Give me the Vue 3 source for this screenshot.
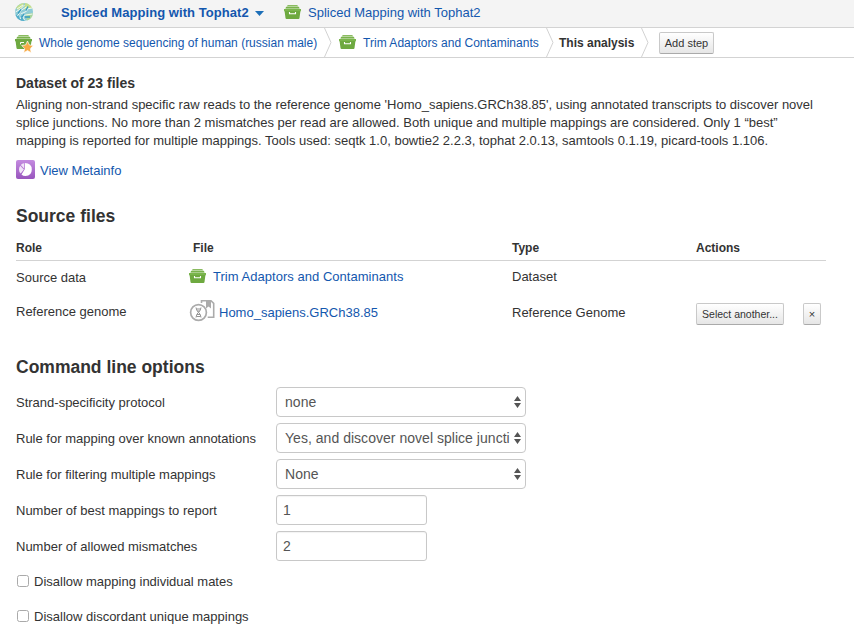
<script setup>
import { h, ref } from 'vue'

const BoxIcon = () =>
  h('svg', { width: 17, height: 14, viewBox: '0 0 17 14' }, [
    h('path', { d: 'M4 0h9q.7 0 .8 1H3.200Q3.300 0 4 0z', fill: '#8abb60' }),
    h('path', { d: 'M2.500 1.700h12q.7 0 .8 1.300H1.700q.1-1.300.8-1.300z', fill: '#79b24c' }),
    h('path', { d: 'M3.200 1h10.600l.4.700H2.800zM1.700 3h13.600l.4 1H1.300z', fill: '#a9cd8b' }),
    h('path', { d: 'M.5 4h16q.5 0 .5.500v1.200q0 .5-.6.500l-.9 6.800q-.1 1-1 1h-12q-.9 0-1-1L.6 6.200Q0 6.200 0 5.700V4.500Q0 4 .5 4z', fill: '#6ea940' }),
    h('path', { d: 'M.5 4h16q.5 0 .5.500V6H0V4.500Q0 4 .5 4z', fill: '#7ab54c' }),
    h('path', { d: 'M5.500 7v1.800h6V7', fill: 'none', stroke: '#fff', 'stroke-width': 1.1, 'stroke-linejoin': 'round' })
  ])

const selects = [
  { label: 'Strand-specificity protocol', value: 'none' },
  { label: 'Rule for mapping over known annotations', value: 'Yes, and discover novel splice juncti' },
  { label: 'Rule for filtering multiple mappings', value: 'None' }
]
const inputs = ref([
  { label: 'Number of best mappings to report', value: '1' },
  { label: 'Number of allowed mismatches', value: '2' }
])
const checks = ref([
  { label: 'Disallow mapping individual mates', on: false },
  { label: 'Disallow discordant unique mappings', on: false }
])
</script>

<template>
  <div class="page">
    <header class="topbar">
      <svg class="globe" width="18" height="18" viewBox="0 0 18 18">
        <circle cx="9" cy="9" r="9" fill="#8dcbd6" />
        <path d="M1 5Q4 .5 9 0l-1 4-5 3zM10 0q5 .5 7.500 5.500L12 5l-3 2z" fill="#c5df8e" />
        <path d="M11 11l7-1q-.5 6-6 7.500z" fill="#a8d59c" />
        <path d="M.5 12l5-1 4 7q-7 0-9-6z" fill="#52aecb" />
        <path d="M2 6l6-4M.5 9l5-3 4-4M2.500 13l4-6 5-3M5.500 16q-2-6 2.500-6 4.500-1 5-5M9.500 17q-3-5 1-5l7-1M12 6l5-1" fill="none" stroke="#eef8f2" stroke-width="1" />
        <path d="M3 10.500l3-4M11 7.500l2-4M7 14l2-3M10 14h5" fill="none" stroke="#359bc0" stroke-width="1.300" />
      </svg>
      <a class="app-name">Spliced Mapping with Tophat2</a>
      <svg class="caret" width="9" height="5" viewBox="0 0 9 5"><path d="M0 0h9L4.500 5z" fill="#1d6fb8" /></svg>
      <BoxIcon class="top-box" />
      <a class="file-name">Spliced Mapping with Tophat2</a>
    </header>

    <nav class="crumbs">
      <svg class="star-box" width="18" height="18" viewBox="0 0 18 18">
        <path d="M4 0h9q.7 0 .8 1H3.200Q3.300 0 4 0z" fill="#8abb60" />
        <path d="M2.500 1.700h12q.7 0 .8 1.300H1.700q.1-1.300.8-1.300z" fill="#79b24c" />
        <path d="M3.200 1h10.600l.4.700H2.800zM1.700 3h13.600l.4 1H1.300z" fill="#a9cd8b" />
        <path d="M0 4h17v2.200h-.6L15.500 14h-13q-.9 0-1-1L.6 6.200H0z" fill="#6ea940" />
        <path d="M5.500 9.300V7.500H9" fill="none" stroke="#fff" />
        <path d="M12.500 6l1.900 4 4 .5-3 2.900.8 4.300-3.700-2.100-3.700 2.100.8-4.300-3-2.900 4-.5z" fill="#f7aa44" stroke="#fff" stroke-width=".7" />
      </svg>
      <a class="crumb c1">Whole genome sequencing of human (russian male)</a>
      <svg class="chev" width="8" height="29" viewBox="0 0 8 29"><path d="M.5 0L7 14.500.5 29" fill="none" stroke="#d2d2d2" /></svg>
      <BoxIcon class="crumb-box" />
      <a class="crumb c2">Trim Adaptors and Contaminants</a>
      <svg class="chev" width="8" height="29" viewBox="0 0 8 29"><path d="M.5 0L7 14.500.5 29" fill="none" stroke="#d2d2d2" /></svg>
      <b class="crumb c3">This analysis</b>
      <svg class="chev" width="8" height="29" viewBox="0 0 8 29"><path d="M.5 0L7 14.500.5 29" fill="none" stroke="#d2d2d2" /></svg>
      <button class="btn add">Add step</button>
    </nav>

    <main>
      <h3>Dataset of 23 files</h3>
      <p class="desc">
        <span>Aligning non-strand specific raw reads to the reference genome 'Homo_sapiens.GRCh38.85', using annotated transcripts to discover novel</span><br>
        <span>splice junctions. No more than 2 mismatches per read are allowed. Both unique and multiple mappings are considered. Only 1 “best”</span><br>
        <span>mapping is reported for multiple mappings. Tools used: seqtk 1.0, bowtie2 2.2.3, tophat 2.0.13, samtools 0.1.19, picard-tools 1.106.</span>
      </p>
      <div class="meta">
        <svg width="19" height="19" viewBox="0 0 19 19">
          <defs><linearGradient id="purple" x1="0" y1="0" x2="0" y2="1"><stop offset="0" stop-color="#c48be0" /><stop offset="1" stop-color="#9855bd" /></linearGradient></defs>
          <rect width="19" height="19" rx="2" fill="url(#purple)" />
          <path d="M8.800 9.300V3q7 .2 7 6.500T9.500 16q-2.500 0-4-1.600z" fill="#fff" />
          <path d="M8 3.200v5.200L4.800 4.900Q6 3.600 8 3.200zM4.200 5.700l3.700 3.700-3.200 4.200Q3 12 3 9.500q0-2.200 1.200-3.800z" fill="#f1e4f8" />
        </svg>
        <a>View Metainfo</a>
      </div>

      <h2 class="source-title">Source files</h2>
      <div class="grid head"><b>Role</b><b class="file-head">File</b><b>Type</b><b>Actions</b></div>
      <div class="grid source">
        <span class="role">Source data</span>
        <span class="file"><BoxIcon class="row-box" /><a>Trim Adaptors and Contaminants</a></span>
        <span>Dataset</span>
      </div>
      <div class="grid genome">
        <span class="role">Reference genome</span>
        <span class="file">
          <svg width="26" height="24" viewBox="0 0 26 24" fill="none" stroke="#ababab">
            <path d="M12.500 4V1.700h9.500l2.700 2.600v14h-6" stroke-width="1.600" />
            <path d="M17 1h5v8.500l-2.500-2L17 9.500z" fill="#ababab" stroke="none" />
            <circle cx="9.500" cy="13.500" r="7.900" stroke-width="1.700" />
            <path d="M7 8.500c0 4.500 5 5 5 10M12 8.500c0 4.500-5 5-5 10M7.500 10h4M8 12h3M8 15.500h3M7.500 17.500h4" stroke="#959595" stroke-width="1" />
          </svg><a>Homo_sapiens.GRCh38.85</a>
        </span>
        <span>Reference Genome</span>
        <span class="actions"><button class="btn another">Select another...</button><button class="btn close">×</button></span>
      </div>

      <h2 class="opt-title">Command line options</h2>
      <div v-for="s in selects" :key="s.label" class="option">
        <label>{{ s.label }}</label>
        <div class="select">
          <span>{{ s.value }}</span>
          <svg width="7" height="12" viewBox="0 0 7 12"><path d="M0 5l3.500-5L7 5zM0 7h7l-3.500 5z" fill="#555" /></svg>
        </div>
      </div>
      <div v-for="i in inputs" :key="i.label" class="option">
        <label>{{ i.label }}</label>
        <input v-model="i.value" class="number" type="text">
      </div>
      <label v-for="c in checks" :key="c.label" class="check">
        <input v-model="c.on" type="checkbox"><span>{{ c.label }}</span>
      </label>
    </main>
  </div>
</template>

<style>
body { margin: 0; background: #fff; overflow: hidden; }
</style>

<style scoped>
* { box-sizing: border-box; }
.page { width: 854px; height: 637px; overflow: hidden; font: 13px/18px "Liberation Sans", Arial, sans-serif; color: #333; }
svg { flex: none; display: block; }
a { color: #1357ae; white-space: nowrap; }
.topbar { height: 28px; background: #f4f4f4; border-bottom: 1px solid #d3d3d3; display: flex; align-items: center; padding: 0 0 1px 15px; }
.globe { margin-top: -2px; }
.app-name { font-weight: bold; margin-left: 28px; width: 188px; letter-spacing: .06px; }
.caret { margin: 1px 20px 0 6px; }
.top-box { margin-top: -2px; }
.file-name { margin-left: 7px; }
.crumbs { height: 30px; border-bottom: 1px solid #d3d3d3; display: flex; align-items: center; padding-left: 15px; }
.star-box { margin-top: 2px; overflow: visible; }
.crumb { white-space: nowrap; font-size: 12px; }
.c1 { width: 279px; margin: 0 6px; }
.crumb-box { margin: -2px 0 0 7px; }
.c2 { margin-left: 7px; width: 183px; letter-spacing: .03px; }
.c3 { margin-left: 5px; width: 82px; }
.btn { font: 11px/19px "Liberation Sans", Arial, sans-serif; height: 22px; padding: 0; border: 1px solid #c9c9c9; border-bottom-color: #aaa; border-radius: 2px; background: linear-gradient(#fff, #e6e6e6); color: #333; white-space: nowrap; }
.add { width: 55px; margin-left: 10px; padding-top: 1px; }
main { padding: 15px 28px 0 16px; }
h2, h3, p { margin: 0; }
h3 { font-size: 14px; line-height: 20px; }
.desc { margin-top: 3px; white-space: nowrap; }
.meta { display: flex; align-items: center; gap: 5px; height: 20px; margin-top: 10px; }
.meta svg { margin-top: -1px; }
.meta a { margin-top: 2px; }
h2 { font-size: 17.5px; line-height: 24px; }
.source-title { margin-top: 24px; }
.grid { display: grid; grid-template-columns: 173px 323px 184px 130px; }
.head { margin-top: 11px; height: 22px; border-bottom: 1px solid #d3d3d3; font-size: 12px; }
.file-head { padding-left: 4px; }
.source { padding-top: 7px; height: 43px; }
.source .role { padding-top: 1px; }
.source .file { display: flex; height: 18px; align-items: center; gap: 7px; letter-spacing: .03px; }
.row-box { margin-top: -2px; }
.genome { height: 42px; }
.genome .role { margin-top: -1px; }
.genome .file { display: flex; align-items: flex-start; gap: 4px; }
.genome svg { margin-top: -5px; }
.actions { display: flex; margin-top: -1px; }
.another { width: 88px; font-size: 10.5px; }
.close { width: 18px; margin-left: 19px; line-height: 20px; }
.opt-title { margin-top: 9px; margin-bottom: 8px; }
.option { display: flex; align-items: center; height: 30px; margin-bottom: 6px; }
.option label { width: 260px; padding-top: 2px; white-space: nowrap; }
.select { width: 250px; height: 30px; border: 1px solid #c8c8c8; border-radius: 4px; display: flex; align-items: center; justify-content: space-between; padding: 0 4px 0 8px; font-size: 14px; letter-spacing: .03px; color: #555; }
.select span { white-space: nowrap; }
.number { width: 151px; height: 30px; border: 1px solid #c8c8c8; border-radius: 3px; padding: 0 6px; font: 14px "Liberation Sans", Arial, sans-serif; color: #555; box-shadow: inset 0 1px 1px #0000000d; }
.check { display: flex; align-items: center; height: 35px; gap: 5px; }
.check span { padding-top: 2px; }
.check:first-of-type { margin-top: -4px; }
.check input { appearance: none; width: 12px; height: 12px; margin: 0 0 0 1px; border: 1px solid #aaa; border-radius: 2.5px; background: #fff; }
</style>
